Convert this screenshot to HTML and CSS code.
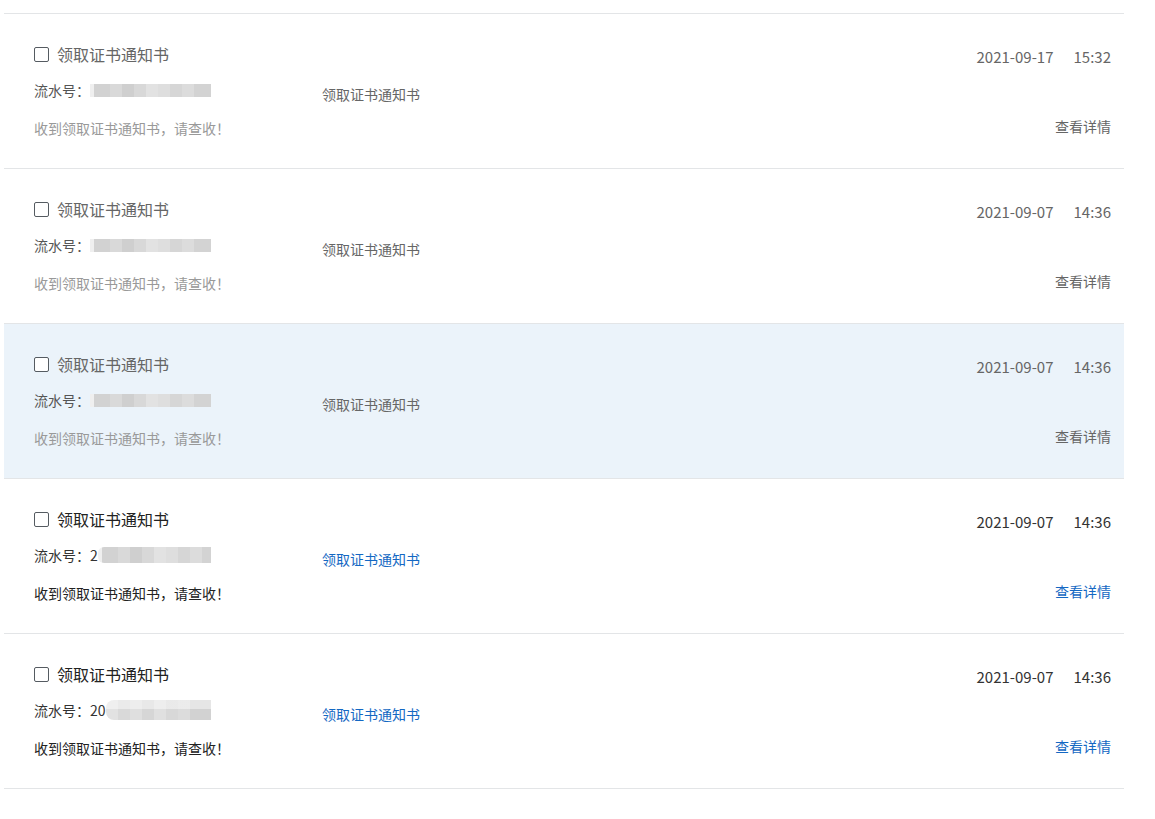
FILE: index.html
```html
<!DOCTYPE html>
<html lang="zh-CN">
<head>
<meta charset="utf-8">
<title>消息列表</title>
<link rel="stylesheet" href="styles.css">
</head>
<body>
<div class="list">
  <div class="item read">
    <div class="line line-top">
      <label class="title"><span class="box"></span>领取证书通知书</label>
      <div class="time"><span>2021-09-17</span><span>15:32</span></div>
    </div>
    <div class="line line-mid">
      <div class="serial">流水号：<span class="mask"></span></div>
      <div class="type">领取证书通知书</div>
    </div>
    <div class="line line-bot">
      <div class="msg">收到领取证书通知书，请查收！</div>
      <a class="more">查看详情</a>
    </div>
  </div>
  <div class="item read">
    <div class="line line-top">
      <label class="title"><span class="box"></span>领取证书通知书</label>
      <div class="time"><span>2021-09-07</span><span>14:36</span></div>
    </div>
    <div class="line line-mid">
      <div class="serial">流水号：<span class="mask"></span></div>
      <div class="type">领取证书通知书</div>
    </div>
    <div class="line line-bot">
      <div class="msg">收到领取证书通知书，请查收！</div>
      <a class="more">查看详情</a>
    </div>
  </div>
  <div class="item read hover">
    <div class="line line-top">
      <label class="title"><span class="box"></span>领取证书通知书</label>
      <div class="time"><span>2021-09-07</span><span>14:36</span></div>
    </div>
    <div class="line line-mid">
      <div class="serial">流水号：<span class="mask"></span></div>
      <div class="type">领取证书通知书</div>
    </div>
    <div class="line line-bot">
      <div class="msg">收到领取证书通知书，请查收！</div>
      <a class="more">查看详情</a>
    </div>
  </div>
  <div class="item unread">
    <div class="line line-top">
      <label class="title"><span class="box"></span>领取证书通知书</label>
      <div class="time"><span>2021-09-07</span><span>14:36</span></div>
    </div>
    <div class="line line-mid">
      <div class="serial">流水号：2<span class="mask mask-short"></span></div>
      <div class="type">领取证书通知书</div>
    </div>
    <div class="line line-bot">
      <div class="msg">收到领取证书通知书，请查收！</div>
      <a class="more">查看详情</a>
    </div>
  </div>
  <div class="item unread">
    <div class="line line-top">
      <label class="title"><span class="box"></span>领取证书通知书</label>
      <div class="time"><span>2021-09-07</span><span>14:36</span></div>
    </div>
    <div class="line line-mid">
      <div class="serial">流水号：20<span class="mask mask-shorter"></span></div>
      <div class="type">领取证书通知书</div>
    </div>
    <div class="line line-bot">
      <div class="msg">收到领取证书通知书，请查收！</div>
      <a class="more">查看详情</a>
    </div>
  </div>
</div>
</body>
</html>
```

FILE: styles.css
```css
html, body {
  margin: 0;
  padding: 0;
  background: #ffffff;
}

body {
  font-family: "Noto Sans CJK SC", "Microsoft YaHei", sans-serif;
  font-size: 14px;
  color: #333;
  text-spacing-trim: space-all;
}

.list {
  margin: 13px 0 0 4px;
  width: 1120px;
  border-bottom: 1px solid #e3e5e7;
}

.item {
  box-sizing: border-box;
  height: 155px;
  border-top: 1px solid #e3e5e7;
  padding: 31px 13px 0 30px;
  display: flex;
  flex-direction: column;
}

.item.hover {
  background: #ebf3fa;
}

.line {
  display: flex;
}

.line-top {
  height: 20px;
  align-items: center;
  justify-content: space-between;
}

.title {
  display: flex;
  align-items: center;
  font-size: 16px;
  line-height: 20px;
  margin-top: -2px;
}

.box {
  box-sizing: border-box;
  width: 15px;
  height: 15px;
  border: 1px solid #555b61;
  border-radius: 2px;
  margin-right: 8px;
  margin-top: 1px;
  background: #fff;
}

.time {
  display: flex;
  gap: 20px;
  font-size: 15px;
  line-height: 20px;
  margin-top: 3px;
}

.line-mid {
  margin-top: 15px;
  height: 20px;
  align-items: flex-start;
}

.serial {
  width: 288px;
  display: flex;
  align-items: center;
  line-height: 20px;
}

.mask {
  display: inline-block;
  width: 121px;
  height: 13px;
  background: linear-gradient(to right,
    #efefef 0, #efefef 4px,
    #d2d2d2 4px, #d2d2d2 20px,
    #d9d9d9 20px, #d9d9d9 32px,
    #cfcfcf 32px, #cfcfcf 44px,
    #d8d8d8 44px, #d8d8d8 56px,
    #e2e2e2 56px, #e2e2e2 68px,
    #dedede 68px, #dedede 80px,
    #d6d6d6 80px, #d6d6d6 92px,
    #dcdcdc 92px, #dcdcdc 104px,
    #d3d3d3 104px, #d3d3d3 121px);
  filter: blur(0.6px);
}

.mask-short {
  width: 113px;
  height: 16px;
  border-radius: 6px 0 0 6px;
}

.mask-shorter {
  width: 105px;
  height: 20px;
  border-radius: 8px 0 0 8px;
  background: linear-gradient(to bottom, rgba(255,255,255,0.45) 0, rgba(255,255,255,0.45) 45%, rgba(255,255,255,0) 45%),
    linear-gradient(to right,
    #e2e2e2 0, #e2e2e2 12px,
    #d9d9d9 12px, #d9d9d9 24px,
    #dfdfdf 24px, #dfdfdf 36px,
    #d6d6d6 36px, #d6d6d6 48px,
    #e0e0e0 48px, #e0e0e0 60px,
    #d8d8d8 60px, #d8d8d8 72px,
    #dcdcdc 72px, #dcdcdc 84px,
    #d2d2d2 84px, #d2d2d2 105px);
}

.type {
  line-height: 20px;
  padding-top: 4px;
}

.line-bot {
  margin-top: 16px;
  align-items: flex-start;
  justify-content: space-between;
}

.msg {
  line-height: 20px;
  padding-top: 2px;
}

.more {
  line-height: 20px;
  cursor: pointer;
}

/* read state */
.read .title { color: #666; }
.read .time { color: #666; }
.read .serial { color: #555; }
.read .type { color: #666; }
.read .msg { color: #999; }
.read .more { color: #666; }

/* unread state */
.unread .title { color: #222; }
.unread .time { color: #333; }
.unread .serial { color: #333; }
.unread .type { color: #1468c3; }
.unread .msg { color: #222; }
.unread .more { color: #1468c3; }
```
